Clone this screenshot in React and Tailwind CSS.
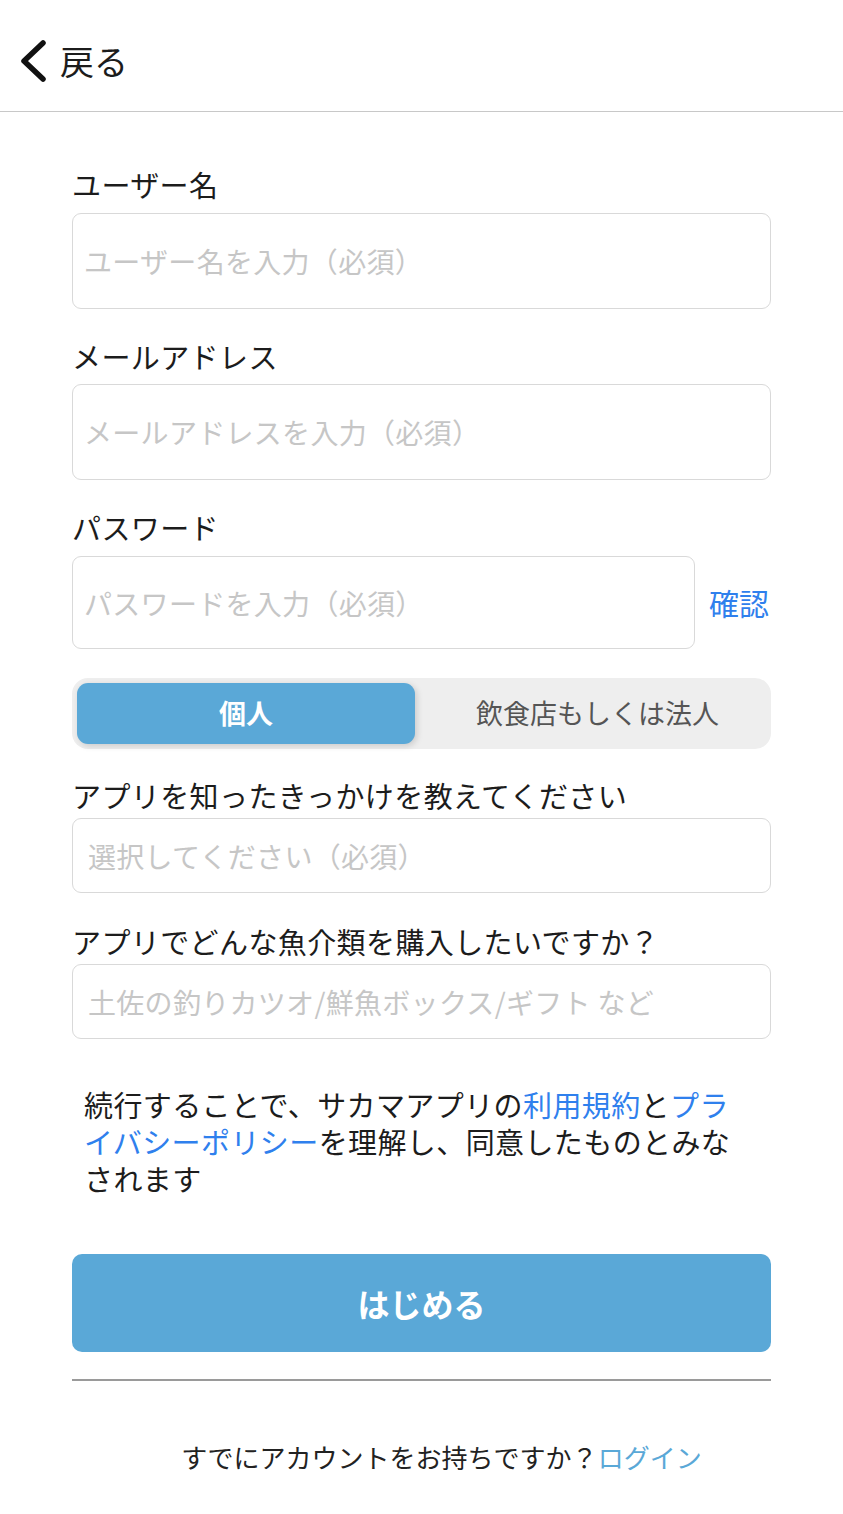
import React, { useState } from "react";

const font = { fontFamily: '"Noto Sans CJK JP", "Noto Sans", sans-serif' };

function Field({ label, placeholder, height, labelGap, top, pad = "px-[11px]", children }) {
  return (
    <div className={top}>
      <div className={`text-[29px] leading-[40px] tracking-[0.4px] text-[#1c1c1c] ${labelGap}`}>{label}</div>
      <div className="flex items-center">
        <input
          placeholder={placeholder}
          className={`${height} ${pad} flex-1 min-w-0 rounded-[9px] border border-[#d9d9d9] bg-white text-[28px] tracking-[0.3px] text-[#222] outline-none placeholder:text-[#c6c6c6]`}
          style={font}
        />
        {children}
      </div>
    </div>
  );
}

export default function App() {
  const [type, setType] = useState("personal");

  return (
    <div className="min-h-[1514px] w-[843px] bg-white" style={font}>
      <header className="flex h-[112px] items-center border-b border-[#c8c8c8] pl-[18px] pt-[10px]">
        <svg width="32" height="44" viewBox="0 0 32 44" fill="none">
          <path d="M25 4 L6 22 L25 40" stroke="#111" strokeWidth="5.5" strokeLinecap="round" strokeLinejoin="round" />
        </svg>
        <span className="ml-[10px] text-[34px] leading-none text-[#1c1c1c]">戻る</span>
      </header>

      <main className="px-[72px]">
        <Field label="ユーザー名" placeholder="ユーザー名を入力（必須）" height="h-[96px]" labelGap="mb-[9px]" top="mt-[52px]" />
        <Field label="メールアドレス" placeholder="メールアドレスを入力（必須）" height="h-[96px]" labelGap="mb-[8px]" top="mt-[27px]" />
        <Field label="パスワード" placeholder="パスワードを入力（必須）" height="h-[93px]" labelGap="mb-[9px]" top="mt-[27px]">
          <button className="w-[76px] pr-[2px] text-right text-[30px] text-[#2f80ed]">確認</button>
        </Field>

        <div className="mt-[29px] flex h-[71px] rounded-[16px] bg-[#eeeeee] p-[5px]">
          <button
            onClick={() => setType("personal")}
            className={`w-[338px] rounded-[11px] text-[27px] font-bold ${type === "personal" ? "bg-[#5aa8d7] text-white shadow-[2px_2px_6px_rgba(0,0,0,0.15)]" : "text-[#555]"}`}
          >
            個人
          </button>
          <button
            onClick={() => setType("corp")}
            className={`flex-1 rounded-[11px] pl-[14px] text-[27px] ${type === "corp" ? "bg-[#5aa8d7] font-bold text-white shadow-[2px_2px_6px_rgba(0,0,0,0.15)]" : "text-[#555]"}`}
          >
            飲食店もしくは法人
          </button>
        </div>

        <Field label="アプリを知ったきっかけを教えてください" placeholder="選択してください（必須）" height="h-[75px]" labelGap="mb-[3px]" top="mt-[26px]" pad="px-[15px]" />
        <Field label="アプリでどんな魚介類を購入したいですか？" placeholder="土佐の釣りカツオ/鮮魚ボックス/ギフト など" height="h-[75px]" labelGap="mb-[3px]" top="mt-[28px]" pad="px-[15px]" />

        <p className="mt-[47px] w-[664px] pl-[12px] text-[29px] leading-[37px] tracking-[0.4px] text-[#1c1c1c]">
          続行することで、サカマアプリの<span className="text-[#2f80ed]">利用規約</span>と<span className="text-[#2f80ed]">プライバシーポリシー</span>を理解し、同意したものとみなされます
        </p>

        <button className="mt-[57px] flex h-[98px] w-full items-center justify-center rounded-[10px] bg-[#5aa8d7] text-[32px] font-bold text-white">
          はじめる
        </button>

        <div className="mt-[27px] h-[2px] bg-[#9a9a9a]" />

        <p className="mt-[56px] pl-[40px] text-center text-[26px] text-[#222]">
          すでにアカウントをお持ちですか？<span className="text-[#5aa8d7]">ログイン</span>
        </p>
      </main>
    </div>
  );
}
